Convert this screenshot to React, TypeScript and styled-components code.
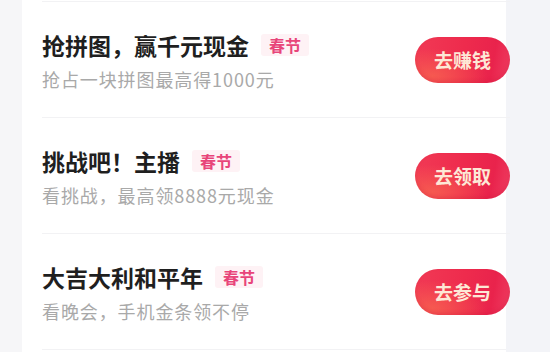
import React from "react";
import styled, { createGlobalStyle } from "styled-components";

const Global = createGlobalStyle`
  html, body { margin: 0; padding: 0; }
  body {
    background: #f6f6f8;
    font-family: "Noto Sans CJK SC", "Noto Sans", sans-serif;
    -webkit-font-smoothing: antialiased;
  }
`;

const Page = styled.div`
  display: flex;
  width: 550px;
  height: 352px;
  overflow: hidden;
  background: #f6f6f8;
`;

const Gutter = styled.div<{ $w: number; $bg: string }>`
  flex: 0 0 ${(p) => p.$w}px;
  background: ${(p) => p.$bg};
`;

const Card = styled.div`
  flex: 0 0 484px;
  background: #ffffff;
  display: flex;
  flex-direction: column;
  padding-top: 1px;
  position: relative;
  z-index: 1;
`;

const Row = styled.div`
  display: flex;
  align-items: center;
  justify-content: space-between;
  height: 115px;
  border-top: 1px solid #f2f2f4;
  margin-left: 20px;
  margin-right: -4px;
`;

const Closing = styled.div`
  border-top: 1px solid #f2f2f4;
  margin-left: 20px;
`;

const Texts = styled.div`
  display: flex;
  flex-direction: column;
  gap: 8px;
  padding-top: 3px;
`;

const TitleLine = styled.div`
  display: flex;
  align-items: center;
  gap: 12px;
`;

const Title = styled.span`
  font-size: 23px;
  line-height: 28px;
  font-weight: 700;
  color: #1f1f1f;
`;

const Tag = styled.span`
  font-size: 16px;
  line-height: 22px;
  padding: 0 8px;
  background: #fef2f5;
  color: #e8457a;
  font-weight: 700;
  border-radius: 3px;
`;

const Sub = styled.div`
  font-size: 18px;
  line-height: 24px;
  color: #a9a9a9;
  letter-spacing: 0.9px;
`;

const Action = styled.button`
  width: 95px;
  height: 46px;
  border: none;
  border-radius: 23px;
  background: radial-gradient(ellipse at 18% 85%, rgba(247, 96, 80, 0.85) 0%, rgba(247, 96, 80, 0) 50%),
    linear-gradient(100deg, #f13a55 0%, #ee2b4d 50%, #e9234c 80%, #ef3e62 100%);
  box-shadow: inset 0 -2px 4px rgba(190, 20, 50, 0.2);
  color: #fde8d6;
  font-family: "Noto Sans CJK SC", sans-serif;
  font-size: 19px;
  font-weight: 700;
  padding: 0;
  display: flex;
  align-items: center;
  justify-content: center;
`;

const items = [
  { title: "抢拼图，赢千元现金", sub: "抢占一块拼图最高得1000元", btn: "去赚钱" },
  { title: "挑战吧！主播", sub: "看挑战，最高领8888元现金", btn: "去领取" },
  { title: "大吉大利和平年", sub: "看晚会，手机金条领不停", btn: "去参与" },
];

export default function App() {
  return (
    <>
      <Global />
      <Page>
        <Gutter $w={22} $bg="#f6f6f8" />
        <Card>
          {items.map((it) => (
            <Row key={it.title}>
              <Texts>
                <TitleLine>
                  <Title>{it.title}</Title>
                  <Tag>春节</Tag>
                </TitleLine>
                <Sub>{it.sub}</Sub>
              </Texts>
              <Action>{it.btn}</Action>
            </Row>
          ))}
          <Closing />
        </Card>
        <Gutter $w={44} $bg="#f3f4f8" />
      </Page>
    </>
  );
}
